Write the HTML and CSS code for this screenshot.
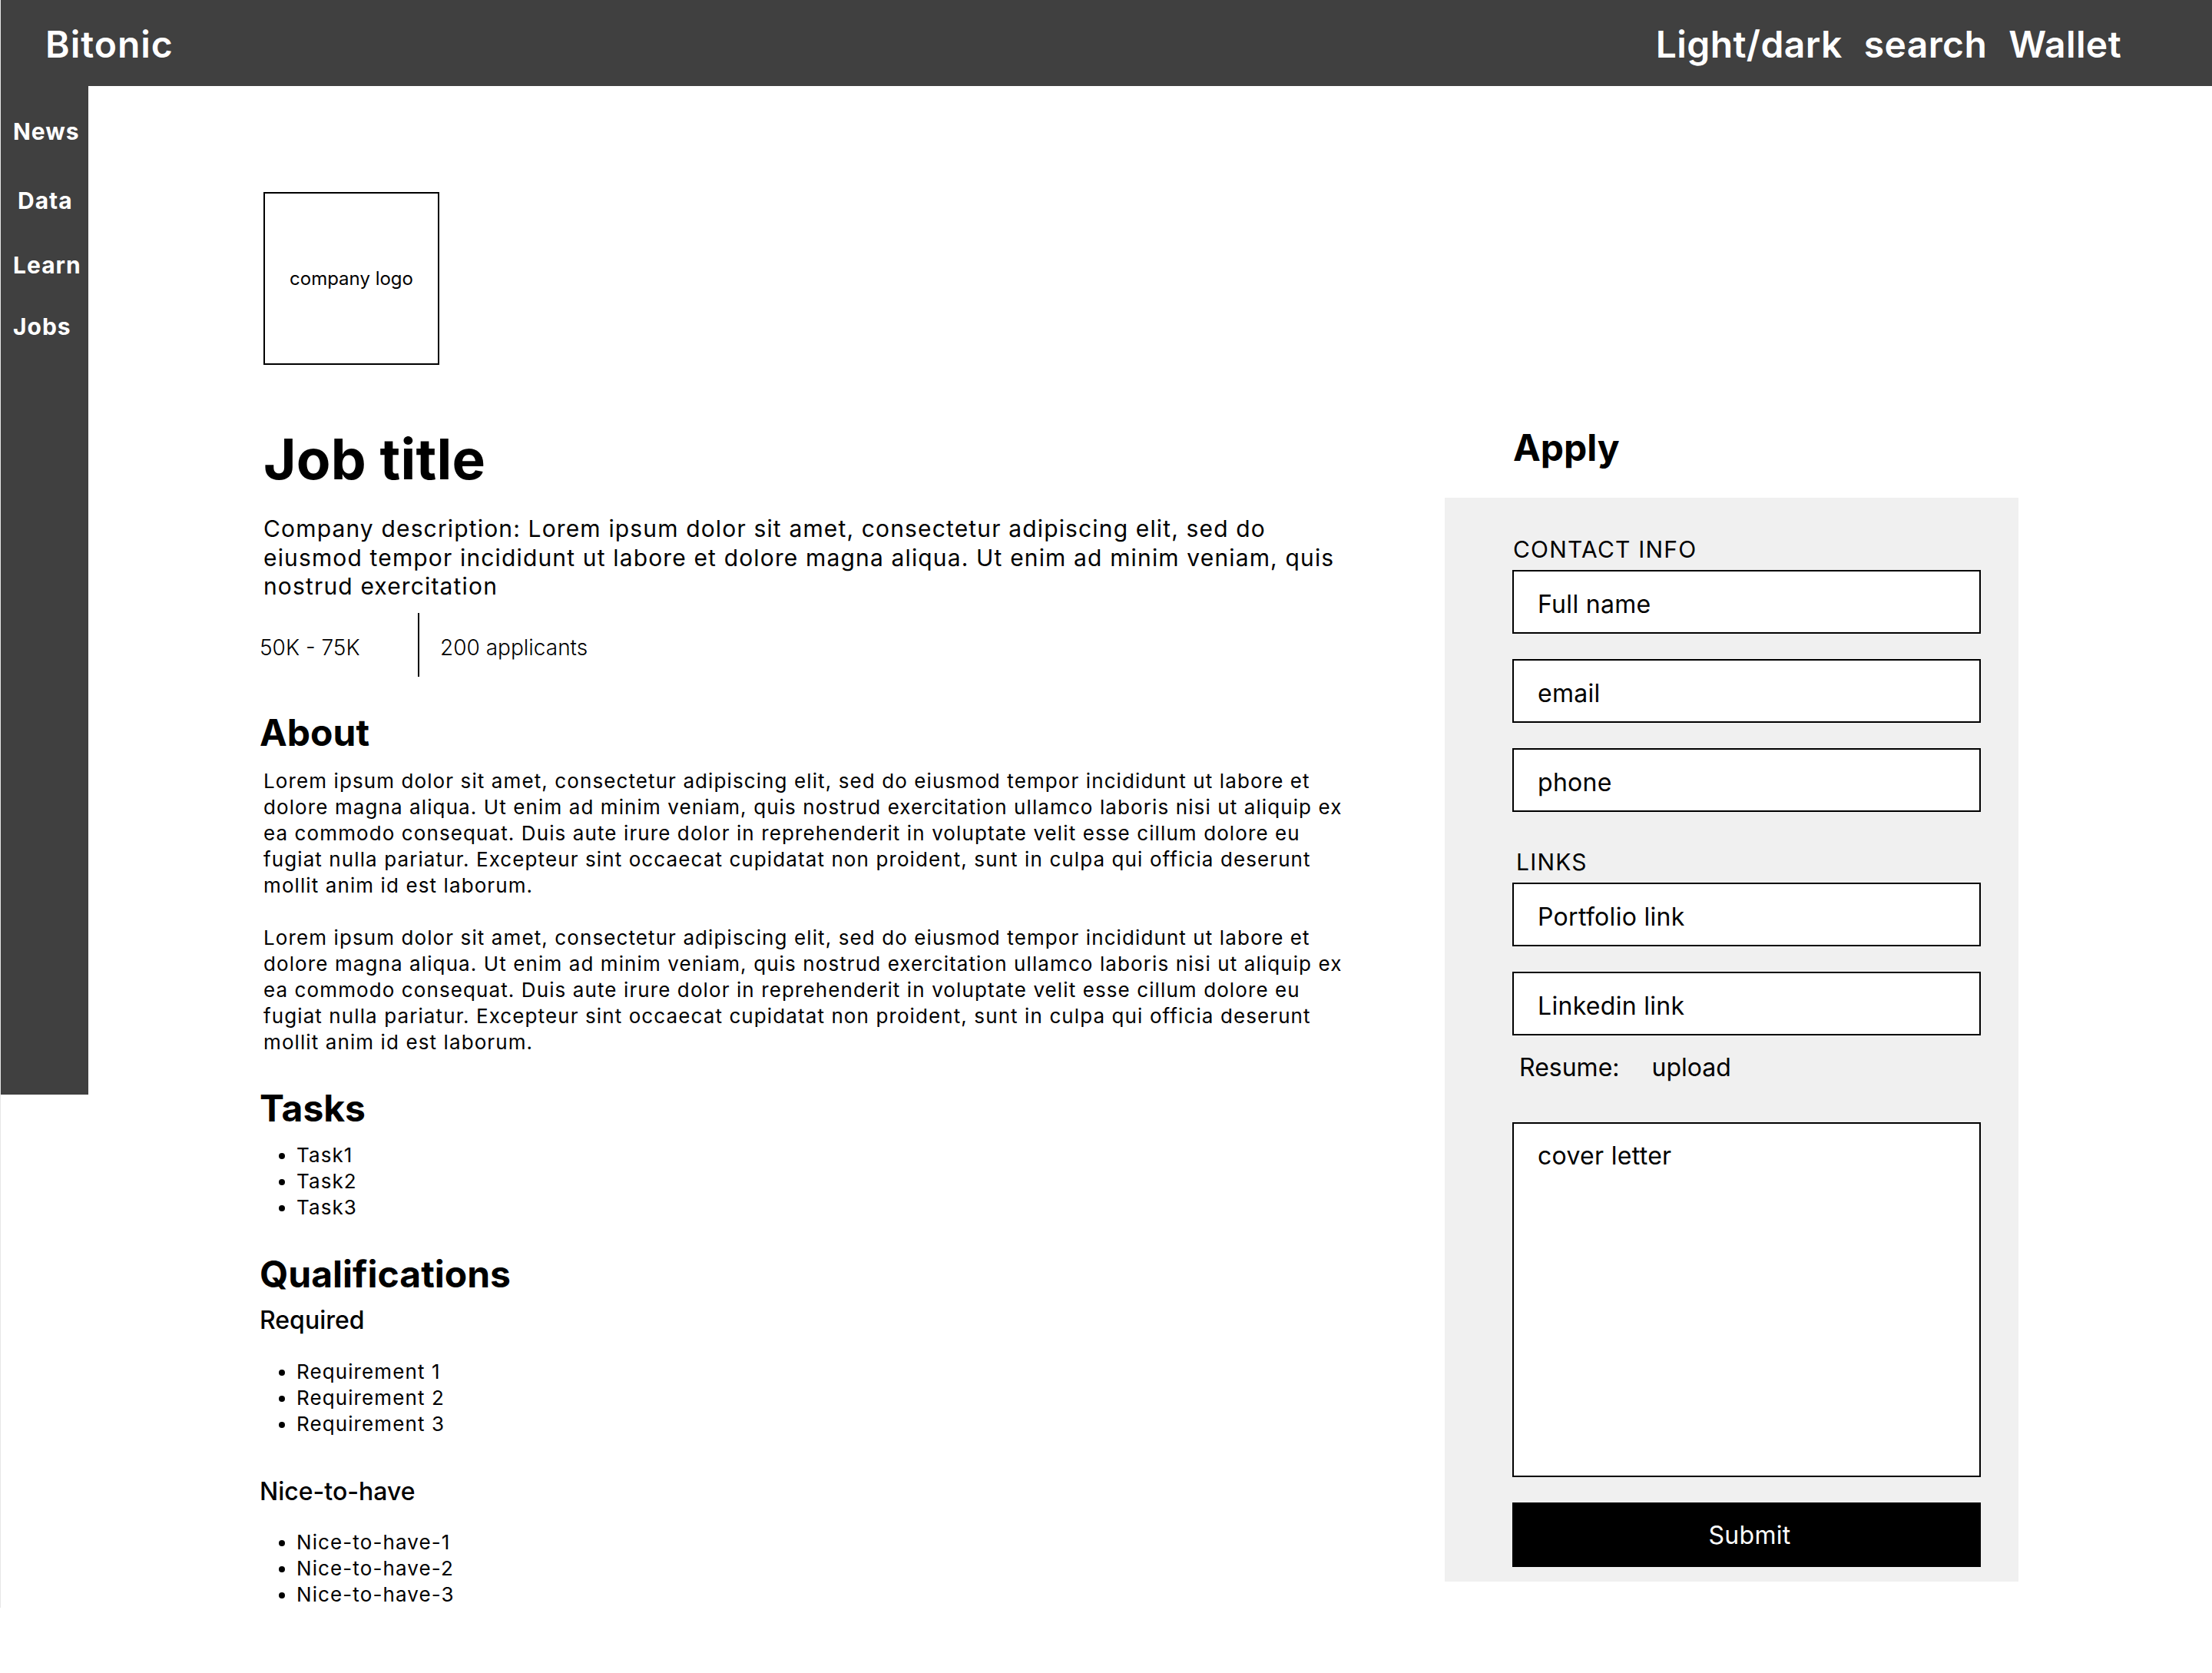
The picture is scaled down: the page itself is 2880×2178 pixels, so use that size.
FILE: index.html
```html
<!DOCTYPE html>
<html lang="en">
<head>
    <meta charset="utf-8"/>
    <title>Bitonic - Job title</title>
    <link rel="stylesheet" href="styles.css">
</head>

<body>
<div class="topbar">
    <div class="brand">Bitonic</div>
    <ul class="top_menu">
        <li>Light/dark</li>
        <li>search</li>
        <li>Wallet</li>
    </ul>
</div>
<div class="page">
    <ul class="side_nav">
        <li class="news">News</li>
        <li class="data">Data</li>
        <li class="learn">Learn</li>
        <li class="jobs">Jobs</li>
    </ul>
    <div class="main">
        <div class="logo">company logo</div>
        <div class="cols">
            <div class="job">
                <h1 class="job_title">Job title</h1>
                <p class="desc">Company description: Lorem ipsum dolor sit amet, consectetur adipiscing elit, sed do eiusmod tempor incididunt ut labore et dolore magna aliqua. Ut enim ad minim veniam, quis nostrud exercitation</p>
                <div class="meta">
                    <span class="salary">50K - 75K</span>
                    <span class="applicants">200 applicants</span>
                </div>

                <h2 class="about_h">About</h2>
                <p class="text first">Lorem ipsum dolor sit amet, consectetur adipiscing elit, sed do eiusmod tempor incididunt ut labore et dolore magna aliqua. Ut enim ad minim veniam, quis nostrud exercitation ullamco laboris nisi ut aliquip ex ea commodo consequat. Duis aute irure dolor in reprehenderit in voluptate velit esse cillum dolore eu fugiat nulla pariatur. Excepteur sint occaecat cupidatat non proident, sunt in culpa qui officia deserunt mollit anim id est laborum.</p>
                <p class="text">Lorem ipsum dolor sit amet, consectetur adipiscing elit, sed do eiusmod tempor incididunt ut labore et dolore magna aliqua. Ut enim ad minim veniam, quis nostrud exercitation ullamco laboris nisi ut aliquip ex ea commodo consequat. Duis aute irure dolor in reprehenderit in voluptate velit esse cillum dolore eu fugiat nulla pariatur. Excepteur sint occaecat cupidatat non proident, sunt in culpa qui officia deserunt mollit anim id est laborum.</p>

                <h2 class="tasks_h">Tasks</h2>
                <ul class="list tasks">
                    <li>Task1</li>
                    <li>Task2</li>
                    <li>Task3</li>
                </ul>

                <h2 class="qual_h">Qualifications</h2>
                <h3 class="req_h">Required</h3>
                <ul class="list req">
                    <li>Requirement 1</li>
                    <li>Requirement 2</li>
                    <li>Requirement 3</li>
                </ul>
                <h3 class="nice_h">Nice-to-have</h3>
                <ul class="list nice">
                    <li>Nice-to-have-1</li>
                    <li>Nice-to-have-2</li>
                    <li>Nice-to-have-3</li>
                </ul>
            </div>

            <div class="apply">
                <h2 class="apply_h">Apply</h2>
                <form class="apply_form" action="#">
                    <div class="label">CONTACT INFO</div>
                    <input class="field" type="text" placeholder="Full name">
                    <input class="field gap" type="text" placeholder="email">
                    <input class="field gap" type="text" placeholder="phone">

                    <div class="label links">LINKS</div>
                    <input class="field" type="text" placeholder="Portfolio link">
                    <input class="field gap" type="text" placeholder="Linkedin link">

                    <div class="resume"><span>Resume:</span><span>upload</span></div>

                    <textarea class="cover" placeholder="cover letter"></textarea>
                    <button class="submit" type="button">Submit</button>
                </form>
            </div>
        </div>
    </div>
</div>
</body>
</html>
```

FILE: styles.css
```css
*{ padding:0; margin:0; box-sizing:border-box; }
body{ font-family:"Inter", "Liberation Sans", sans-serif; color:#000; background:#fff; border-left:1px solid #e6e6e6; }
ul{ list-style:none; }

/* top bar */
.topbar{ height:112px; background:#404040; color:#fff; display:flex; align-items:center; justify-content:space-between; padding:2px 118px 0 58px; }
.brand{ font-size:48px; font-weight:600; letter-spacing:1px; }
.top_menu{ display:flex; gap:28px; font-size:48px; font-weight:600; letter-spacing:0.4px; }

/* page */
.page{ display:flex; align-items:flex-start; }
.side_nav{ flex:0 0 114px; height:1313px; background:#404040; color:#fff; padding-left:16px; font-size:30px; font-weight:700; line-height:36px; letter-spacing:1px; }
.side_nav .news{ margin-top:41px; }
.side_nav .data{ margin-top:54px; margin-left:6px; }
.side_nav .learn{ margin-top:48px; }
.side_nav .jobs{ margin-top:44px; }

.main{ flex:1; padding-left:223px; }
.logo{ width:229px; height:225px; margin:138px 0 0 5px; border:2px solid #000; display:flex; align-items:center; justify-content:center; font-size:24px; }

.cols{ display:flex; align-items:flex-start; margin-top:79px; }
.job{ flex:0 0 1412px; }
.apply{ flex:0 0 747px; margin-left:131px; }

/* job column */
.job_title{ font-size:73px; font-weight:700; line-height:1.21; margin-left:5px; letter-spacing:0.2px; }
.desc{ font-size:30px; line-height:37.5px; margin:28px 0 0 5px; letter-spacing:1.15px; }
.meta{ display:flex; height:83px; margin-top:15px; font-size:28px; font-weight:300; }
.meta span{ display:flex; align-items:center; padding-top:7px; }
.salary{ width:206px; }
.applicants{ border-left:2px solid #000; padding-left:27px; }

h2{ font-size:48px; font-weight:700; line-height:1.21; }
h3{ font-size:32px; font-weight:500; line-height:1.21; }
.about_h{ margin-top:44px; }
.text{ font-size:26px; line-height:34px; margin:34px 0 0 5px; letter-spacing:1.1px; }
.text.first{ margin-top:17px; }
.tasks_h{ margin-top:40px; }
.qual_h{ margin-top:41px; }
.req_h{ margin-top:12px; }
.nice_h{ margin-top:52px; }

.list{ list-style:disc; padding-left:48px; font-size:26px; line-height:34px; letter-spacing:1.1px; }
.tasks{ margin-top:15px; }
.req{ margin-top:30px; }
.nice{ margin-top:29px; }

/* apply column */
.apply_h{ margin:0 0 0 89px; }
.apply_form{ margin-top:36px; background:#f0f0f0; padding:49px 49px 19px 88px; display:flex; flex-direction:column; }
.label{ font-size:30px; line-height:36px; margin-left:1px; letter-spacing:1.2px; }
.label.links{ margin-top:47px; margin-left:5px; }
.field, .cover{ width:610px; border:2px solid #000; background:#fff; font-family:"Inter", "Liberation Sans", sans-serif; font-size:32px; letter-spacing:0.3px; color:#000; padding:6px 31px 0; outline:none; }
.field{ height:83px; margin-top:9px; }
.field.gap{ margin-top:33px; }
.field::placeholder, .cover::placeholder{ color:#000; opacity:1; }
.resume{ display:flex; gap:42px; font-size:32px; margin:22px 0 0 9px; }
.cover{ height:462px; margin-top:52px; padding-top:22px; resize:none; }
.submit{ width:610px; height:84px; margin-top:33px; padding-left:8px; background:#000; color:#fff; border:none; font-family:"Inter", "Liberation Sans", sans-serif; font-size:32px; letter-spacing:0.3px; }
```
